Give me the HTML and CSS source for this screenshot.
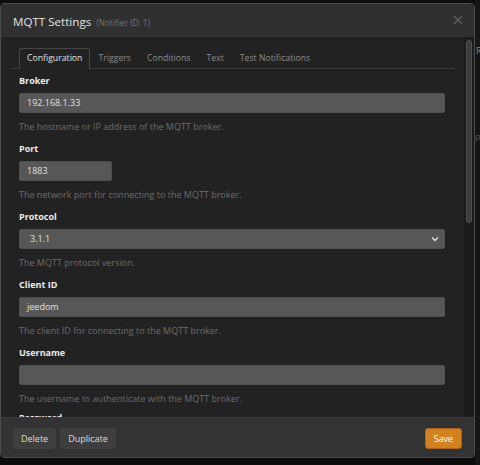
FILE: index.html
```html
<!DOCTYPE html>
<html>
<head>
<meta charset="utf-8">
<link rel="stylesheet" href="styles.css">
</head>
<body>
<div class="page">
  <div class="modal">
    <div class="modal-header">
      <div class="title">MQTT Settings <span class="sub">(Notifier ID: 1)</span></div>
      <svg class="close" width="10" height="10" viewBox="0 0 10 10"><path d="M1 1L9 9M9 1L1 9" stroke="#5a5a5a" stroke-width="1.6" fill="none"/></svg>
    </div>
    <div class="modal-body">
      <div class="content">
        <div class="tabs">
          <div class="tab active">Configuration</div>
          <div class="tab">Triggers</div>
          <div class="tab">Conditions</div>
          <div class="tab">Text</div>
          <div class="tab">Test Notifications</div>
        </div>
        <div class="form">
          <div class="group">
            <div class="label">Broker</div>
            <div class="input">192.168.1.33</div>
            <div class="help">The hostname or IP address of the MQTT broker.</div>
          </div>
          <div class="group">
            <div class="label">Port</div>
            <div class="input short">1883</div>
            <div class="help">The network port for connecting to the MQTT broker.</div>
          </div>
          <div class="group">
            <div class="label">Protocol</div>
            <div class="input select"><span>3.1.1</span><svg width="8" height="6" viewBox="0 0 8 6"><path d="M1 1.5L4 4.5L7 1.5" stroke="#ddd" stroke-width="1.5" fill="none"/></svg></div>
            <div class="help">The MQTT protocol version.</div>
          </div>
          <div class="group">
            <div class="label">Client ID</div>
            <div class="input">jeedom</div>
            <div class="help">The client ID for connecting to the MQTT broker.</div>
          </div>
          <div class="group">
            <div class="label">Username</div>
            <div class="input"></div>
            <div class="help">The username to authenticate with the MQTT broker.</div>
          </div>
          <div class="group last">
            <div class="label">Password</div>
          </div>
        </div>
      </div>
      <div class="scrollbar"><div class="thumb"></div></div>
    </div>
    <div class="modal-footer">
      <div class="btn">Delete</div>
      <div class="btn">Duplicate</div>
      <div class="spacer"></div>
      <div class="btn save">Save</div>
    </div>
  </div>
  <div class="behind">
    <div class="behind-a">R</div>
    <div class="behind-b">pr</div>
  </div>
</div>
</body>
</html>
```
FILE: styles.css
```css
html, body {
  margin: 0;
  padding: 0;
  background: #0d0d0d;
  font-family: "Open Sans", "Liberation Sans", sans-serif;
}
.page {
  display: flex;
  width: 480px;
  height: 465px;
  overflow: hidden;
}
.modal {
  width: 475px;
  height: 455px;
  margin-top: 3px;
  box-sizing: border-box;
  border: 1px solid #4c4c4c;
  border-radius: 4px;
  overflow: hidden;
  display: flex;
  flex-direction: column;
  flex-shrink: 0;
}
.modal-header {
  height: 33px;
  background: #303030;
  display: flex;
  align-items: center;
  padding: 0 11px 0 12px;
  flex-shrink: 0;
}
.title {
  flex: 1;
  font-size: 11.6px;
  color: #e4e4e4;
  padding-top: 1px;
}
.title .sub {
  font-size: 8.3px;
  color: #727272;
  margin-left: 2px;
}
.close {
  margin-top: -1px;
}
.modal-body {
  flex: 1;
  display: flex;
  min-height: 0;
}
.content {
  flex: 1;
  background: #222222;
  overflow: hidden;
  padding-top: 11px;
}
.scrollbar {
  width: 10px;
  background: #1c1c1c;
  flex-shrink: 0;
}
.thumb {
  margin: 3px 0 0 2px;
  width: 4px;
  height: 181px;
  border: 1px solid #505050;
  background: #3c3c3c;
  border-radius: 3px;
}
.tabs {
  display: flex;
  margin: 0 9px;
  padding-left: 9px;
  border-bottom: 1px solid #3a3a3a;
  height: 20px;
}
.tab {
  font-size: 8.7px;
  line-height: 19px;
  padding: 0 7px;
  color: #8a8a8a;
  border: 1px solid transparent;
  border-bottom: none;
  border-radius: 3px 3px 0 0;
}
.tab.active {
  color: #e2e2e2;
  border-color: #454545;
  background: #222222;
  height: 20px;
}
.form {
  padding: 5px 19px 0 18px;
}
.group {
  margin-bottom: 8px;
}
.group.last {
  margin-top: -3px;
}
.label {
  font-size: 9px;
  font-weight: bold;
  color: #ececec;
  line-height: 14px;
  margin-bottom: 5px;
}
.input {
  height: 20px;
  box-sizing: border-box;
  background: #575757;
  border: 1px solid #4e4e4e;
  border-radius: 2px;
  font-size: 9px;
  line-height: 18px;
  color: #e2e2e2;
  padding: 0 7px;
}
.input.short {
  width: 93px;
}
.input.select {
  display: flex;
  align-items: center;
  justify-content: space-between;
  padding: 0 5px 0 10px;
}
.help {
  font-size: 9px;
  color: #6c6c6c;
  line-height: 14px;
  margin-top: 7px;
}
.modal-footer {
  height: 39px;
  background: #333333;
  border-top: 1px solid #3a3a3a;
  display: flex;
  align-items: center;
  padding: 0 12px;
  gap: 4px;
  flex-shrink: 0;
}
.spacer {
  flex: 1;
}
.btn {
  font-size: 9px;
  color: #dcdcdc;
  background: #3e3e3e;
  border-radius: 3px;
  height: 21px;
  line-height: 21px;
  padding: 0 8px;
  margin-top: 1px;
}
.btn.save {
  background: #d3801e;
  border: 1px solid #a9631a;
  color: #ffffff;
  height: 19px;
  line-height: 19px;
  padding: 0 8px;
}
.behind {
  flex: 1;
  background: #161616;
  font-size: 9px;
  color: #8a8a8a;
  overflow: hidden;
  white-space: nowrap;
}
.behind-a {
  margin-top: 44px;
  padding-left: 1px;
}
.behind-b {
  margin-top: 73px;
  color: #555;
}
```
